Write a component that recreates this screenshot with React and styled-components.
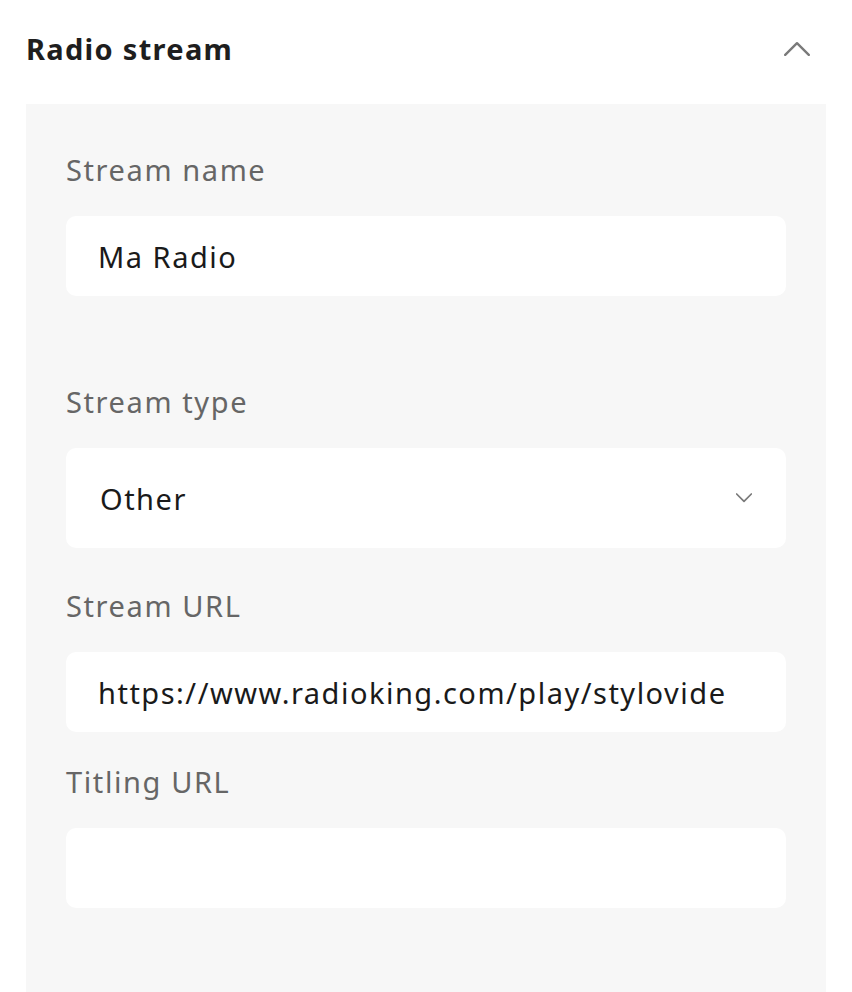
import React from 'react';
import styled, { createGlobalStyle } from 'styled-components';

const Global = createGlobalStyle`
  html, body { margin: 0; padding: 0; background: #fff; }
  body { font-family: "Noto Sans", Lato, sans-serif; }
`;

const Page = styled.div`
  width: 852px;
  padding: 0 26px;
  box-sizing: border-box;
`;

const Header = styled.div`
  height: 104px;
  display: flex;
  align-items: center;
  justify-content: space-between;
  padding-bottom: 8px;
  box-sizing: border-box;
`;

const Title = styled.h2`
  margin: 0;
  font-size: 29px;
  font-weight: 700;
  letter-spacing: 1.3px;
  color: #1e1e1e;
`;

const Toggle = styled.button`
  border: 0;
  background: none;
  padding: 0;
  margin-right: 16px;
  display: flex;
  cursor: pointer;
`;

const Panel = styled.div`
  background: #f7f7f7;
  padding: 48px 40px 100px;
  display: flex;
  flex-direction: column;
`;

const Field = styled.div`
  display: flex;
  flex-direction: column;
  margin-bottom: ${p => p.$after || 0}px;
`;

const Label = styled.label`
  font-size: 29px;
  line-height: 36px;
  letter-spacing: 1.6px;
  color: #666;
  margin-bottom: 28px;
`;

const Input = styled.input`
  height: 80px;
  border: 0;
  border-radius: 10px;
  background: #fff;
  padding: 0 32px;
  font-family: inherit;
  font-size: 29px;
  letter-spacing: 1.5px;
  color: #1a1a1a;
  outline: none;
  box-sizing: border-box;
`;

const SelectBox = styled.div`
  height: 100px;
  border-radius: 10px;
  background: #fff;
  padding: 0 34px;
  display: flex;
  align-items: center;
  justify-content: space-between;
  font-size: 29px;
  letter-spacing: 1.5px;
  color: #1a1a1a;
`;

function Chevron({ up, size, w }) {
  return (
    <svg width={size} height={size / 2 + 2} viewBox="0 0 24 14" fill="none"
      stroke="#7a7a7a" strokeWidth={w} strokeLinecap="round" strokeLinejoin="round">
      <path d={up ? 'M1 13 L12 2 L23 13' : 'M1 1 L12 12 L23 1'} />
    </svg>
  );
}

function TextField({ label, value, after }) {
  return (
    <Field $after={after}>
      <Label>{label}</Label>
      <Input readOnly defaultValue={value} />
    </Field>
  );
}

export default function App() {
  return (
    <Page>
      <Global />
      <Header>
        <Title>Radio stream</Title>
        <Toggle aria-label="Collapse"><Chevron up size={26} w={2.2} /></Toggle>
      </Header>
      <Panel>
        <TextField label="Stream name" value="Ma Radio" after={88} />
        <Field $after={40}>
          <Label>Stream type</Label>
          <SelectBox>
            <span>Other</span>
            <Chevron size={16} w={2.6} />
          </SelectBox>
        </Field>
        <TextField label="Stream URL" value="https://www.radioking.com/play/stylovide" after={32} />
        <TextField label="Titling URL" value="" />
      </Panel>
    </Page>
  );
}
